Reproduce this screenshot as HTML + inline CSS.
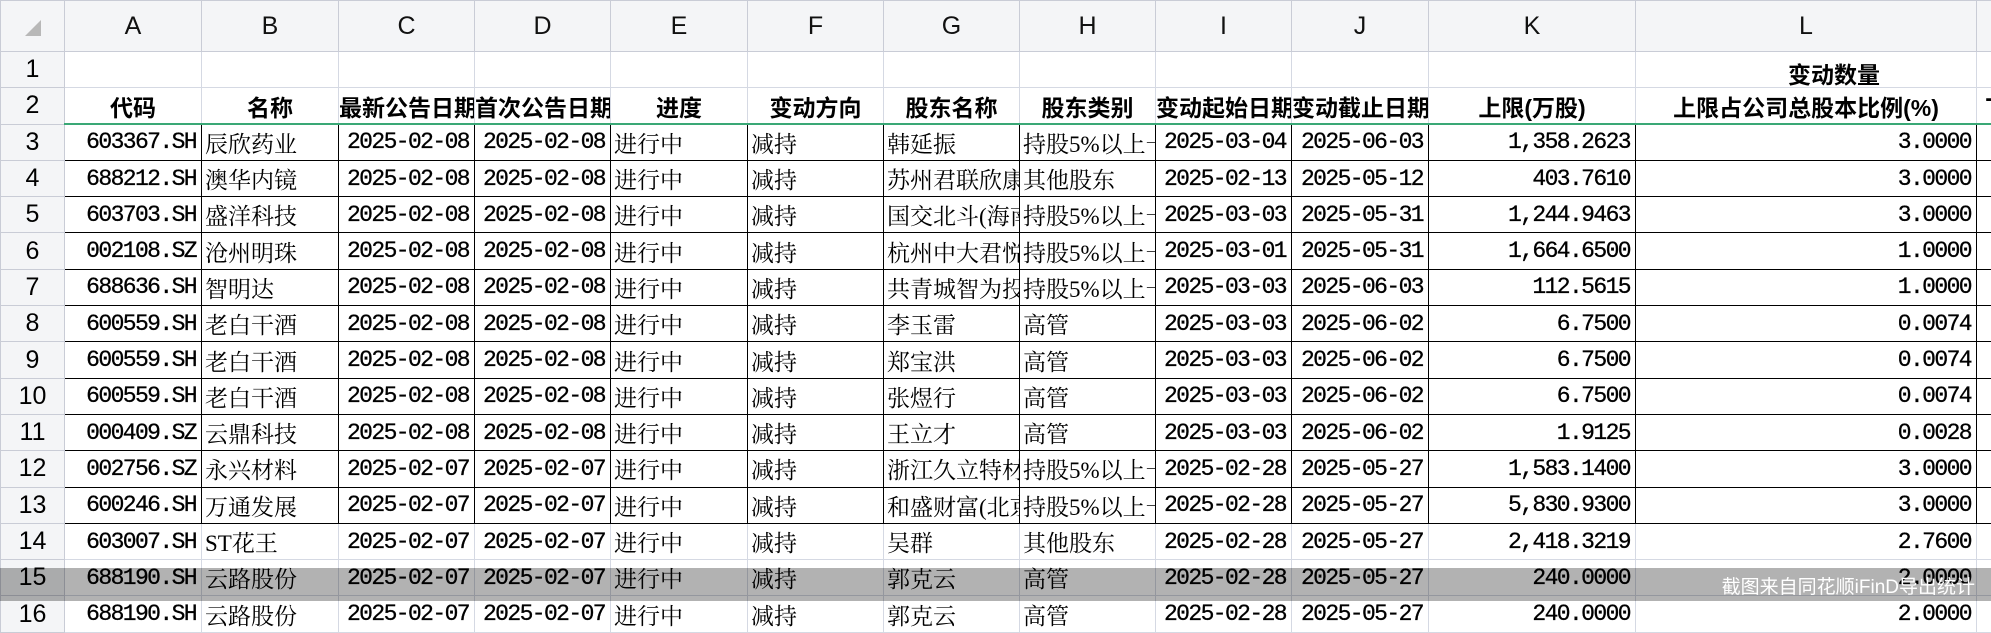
<!DOCTYPE html>
<html><head><meta charset="utf-8"><style>
html,body{margin:0;padding:0;background:#fff;width:1991px;height:601px;overflow:hidden}
table{border-collapse:collapse;table-layout:fixed;position:absolute;left:0;top:0;width:2016px}
td{padding:0 3px;white-space:nowrap;overflow:hidden;border:1px solid #d5d9e3;font-family:"Liberation Serif","Noto Serif CJK SC",serif;font-size:23px;color:#000;height:36.3px;box-sizing:border-box}
tr.h td{background:#f4f5f7;font-family:"Liberation Sans","Noto Sans CJK SC",sans-serif;font-size:25px;text-align:center;height:51px;border-color:#c9ccd6;color:#111}
td.rn{background:#f4f5f7;font-family:"Liberation Sans","Noto Sans CJK SC",sans-serif;font-size:25px;text-align:center;border-color:#c9ccd6;padding:0}
tr.t td:not(.rn){font-family:"Liberation Sans","Noto Sans CJK SC",sans-serif;font-weight:bold;font-size:23px;text-align:center;text-overflow:clip;border-bottom:2px solid #3aa876}
.r{text-align:right;font-family:"Liberation Mono","Noto Serif CJK SC",monospace !important;font-size:23px !important;letter-spacing:-1.6px;-webkit-text-stroke:0.3px #000;padding-right:5px !important}
.l{text-align:left}
tr.d td:not(.rn){border-color:#000}
.g{border-left:1px solid #3aa876 !important}
.ov{position:absolute;left:0;top:568px;width:1991px;height:33px;background:rgba(0,0,0,0.3)}
.wm{position:absolute;right:16px;top:572px;color:#fff;font-family:"Liberation Sans","Noto Sans CJK SC",sans-serif;font-size:19px}
.ct{position:absolute;left:1788px;top:56px;font-family:"Liberation Sans","Noto Sans CJK SC",sans-serif;font-weight:bold;font-size:23px}
.corner{position:absolute;left:25px;top:20px;width:0;height:0;border-left:16px solid transparent;border-bottom:16px solid #b8b8b8}
</style></head><body>
<table>
<colgroup><col style="width:64px"><col style="width:137px"><col style="width:137px"><col style="width:136px"><col style="width:136px"><col style="width:137px"><col style="width:136px"><col style="width:136px"><col style="width:136px"><col style="width:136px"><col style="width:137px"><col style="width:207px"><col style="width:341px"><col style="width:40px"></colgroup>
<tr class="h"><td></td><td>A</td><td>B</td><td class="g">C</td><td>D</td><td>E</td><td>F</td><td>G</td><td>H</td><td>I</td><td>J</td><td>K</td><td>L</td><td></td></tr>
<tr><td class="rn">1</td><td></td><td></td><td class="g"></td><td></td><td></td><td></td><td></td><td></td><td></td><td></td><td></td><td></td><td></td></tr>
<tr class="t"><td class="rn">2</td><td>代码</td><td>名称</td><td class="g" style="text-align:left;padding:0">最新公告日期</td><td style="text-align:left;padding:0">首次公告日期</td><td>进度</td><td>变动方向</td><td>股东名称</td><td>股东类别</td><td style="text-align:left;padding:0">变动起始日期</td><td style="text-align:left;padding:0">变动截止日期</td><td>上限(万股)</td><td>上限占公司总股本比例(%)</td><td class="l">下</td></tr>
<tr class="d"><td class="rn">3</td><td class="r">603367.SH</td><td class="l">辰欣药业</td><td class="r g">2025-02-08</td><td class="r">2025-02-08</td><td class="l">进行中</td><td class="l">减持</td><td class="l">韩延振</td><td class="l">持股5%以上一般股东</td><td class="r">2025-03-04</td><td class="r">2025-06-03</td><td class="r">1,358.2623</td><td class="r">3.0000</td><td></td></tr>
<tr class="d"><td class="rn">4</td><td class="r">688212.SH</td><td class="l">澳华内镜</td><td class="r g">2025-02-08</td><td class="r">2025-02-08</td><td class="l">进行中</td><td class="l">减持</td><td class="l">苏州君联欣康创业</td><td class="l">其他股东</td><td class="r">2025-02-13</td><td class="r">2025-05-12</td><td class="r">403.7610</td><td class="r">3.0000</td><td></td></tr>
<tr class="d"><td class="rn">5</td><td class="r">603703.SH</td><td class="l">盛洋科技</td><td class="r g">2025-02-08</td><td class="r">2025-02-08</td><td class="l">进行中</td><td class="l">减持</td><td class="l">国交北斗(海南)</td><td class="l">持股5%以上一般股东</td><td class="r">2025-03-03</td><td class="r">2025-05-31</td><td class="r">1,244.9463</td><td class="r">3.0000</td><td></td></tr>
<tr class="d"><td class="rn">6</td><td class="r">002108.SZ</td><td class="l">沧州明珠</td><td class="r g">2025-02-08</td><td class="r">2025-02-08</td><td class="l">进行中</td><td class="l">减持</td><td class="l">杭州中大君悦投资</td><td class="l">持股5%以上一般股东</td><td class="r">2025-03-01</td><td class="r">2025-05-31</td><td class="r">1,664.6500</td><td class="r">1.0000</td><td></td></tr>
<tr class="d"><td class="rn">7</td><td class="r">688636.SH</td><td class="l">智明达</td><td class="r g">2025-02-08</td><td class="r">2025-02-08</td><td class="l">进行中</td><td class="l">减持</td><td class="l">共青城智为投资</td><td class="l">持股5%以上一般股东</td><td class="r">2025-03-03</td><td class="r">2025-06-03</td><td class="r">112.5615</td><td class="r">1.0000</td><td></td></tr>
<tr class="d"><td class="rn">8</td><td class="r">600559.SH</td><td class="l">老白干酒</td><td class="r g">2025-02-08</td><td class="r">2025-02-08</td><td class="l">进行中</td><td class="l">减持</td><td class="l">李玉雷</td><td class="l">高管</td><td class="r">2025-03-03</td><td class="r">2025-06-02</td><td class="r">6.7500</td><td class="r">0.0074</td><td></td></tr>
<tr class="d"><td class="rn">9</td><td class="r">600559.SH</td><td class="l">老白干酒</td><td class="r g">2025-02-08</td><td class="r">2025-02-08</td><td class="l">进行中</td><td class="l">减持</td><td class="l">郑宝洪</td><td class="l">高管</td><td class="r">2025-03-03</td><td class="r">2025-06-02</td><td class="r">6.7500</td><td class="r">0.0074</td><td></td></tr>
<tr class="d"><td class="rn">10</td><td class="r">600559.SH</td><td class="l">老白干酒</td><td class="r g">2025-02-08</td><td class="r">2025-02-08</td><td class="l">进行中</td><td class="l">减持</td><td class="l">张煜行</td><td class="l">高管</td><td class="r">2025-03-03</td><td class="r">2025-06-02</td><td class="r">6.7500</td><td class="r">0.0074</td><td></td></tr>
<tr class="d"><td class="rn">11</td><td class="r">000409.SZ</td><td class="l">云鼎科技</td><td class="r g">2025-02-08</td><td class="r">2025-02-08</td><td class="l">进行中</td><td class="l">减持</td><td class="l">王立才</td><td class="l">高管</td><td class="r">2025-03-03</td><td class="r">2025-06-02</td><td class="r">1.9125</td><td class="r">0.0028</td><td></td></tr>
<tr class="d"><td class="rn">12</td><td class="r">002756.SZ</td><td class="l">永兴材料</td><td class="r g">2025-02-07</td><td class="r">2025-02-07</td><td class="l">进行中</td><td class="l">减持</td><td class="l">浙江久立特材科技</td><td class="l">持股5%以上一般股东</td><td class="r">2025-02-28</td><td class="r">2025-05-27</td><td class="r">1,583.1400</td><td class="r">3.0000</td><td></td></tr>
<tr class="d"><td class="rn">13</td><td class="r">600246.SH</td><td class="l">万通发展</td><td class="r g">2025-02-07</td><td class="r">2025-02-07</td><td class="l">进行中</td><td class="l">减持</td><td class="l">和盛财富(北京)</td><td class="l">持股5%以上一般股东</td><td class="r">2025-02-28</td><td class="r">2025-05-27</td><td class="r">5,830.9300</td><td class="r">3.0000</td><td></td></tr>
<tr><td class="rn">14</td><td class="r">603007.SH</td><td class="l">ST花王</td><td class="r g">2025-02-07</td><td class="r">2025-02-07</td><td class="l">进行中</td><td class="l">减持</td><td class="l">吴群</td><td class="l">其他股东</td><td class="r">2025-02-28</td><td class="r">2025-05-27</td><td class="r">2,418.3219</td><td class="r">2.7600</td><td></td></tr>
<tr><td class="rn">15</td><td class="r">688190.SH</td><td class="l">云路股份</td><td class="r g">2025-02-07</td><td class="r">2025-02-07</td><td class="l">进行中</td><td class="l">减持</td><td class="l">郭克云</td><td class="l">高管</td><td class="r">2025-02-28</td><td class="r">2025-05-27</td><td class="r">240.0000</td><td class="r">2.0000</td><td></td></tr>
<tr><td class="rn">16</td><td class="r">688190.SH</td><td class="l">云路股份</td><td class="r g">2025-02-07</td><td class="r">2025-02-07</td><td class="l">进行中</td><td class="l">减持</td><td class="l">郭克云</td><td class="l">高管</td><td class="r">2025-02-28</td><td class="r">2025-05-27</td><td class="r">240.0000</td><td class="r">2.0000</td><td></td></tr>
</table>
<div class="corner"></div>
<div class="ct">变动数量</div>
<div class="ov"></div>
<div class="wm">截图来自同花顺iFinD导出统计</div>
</body></html>
